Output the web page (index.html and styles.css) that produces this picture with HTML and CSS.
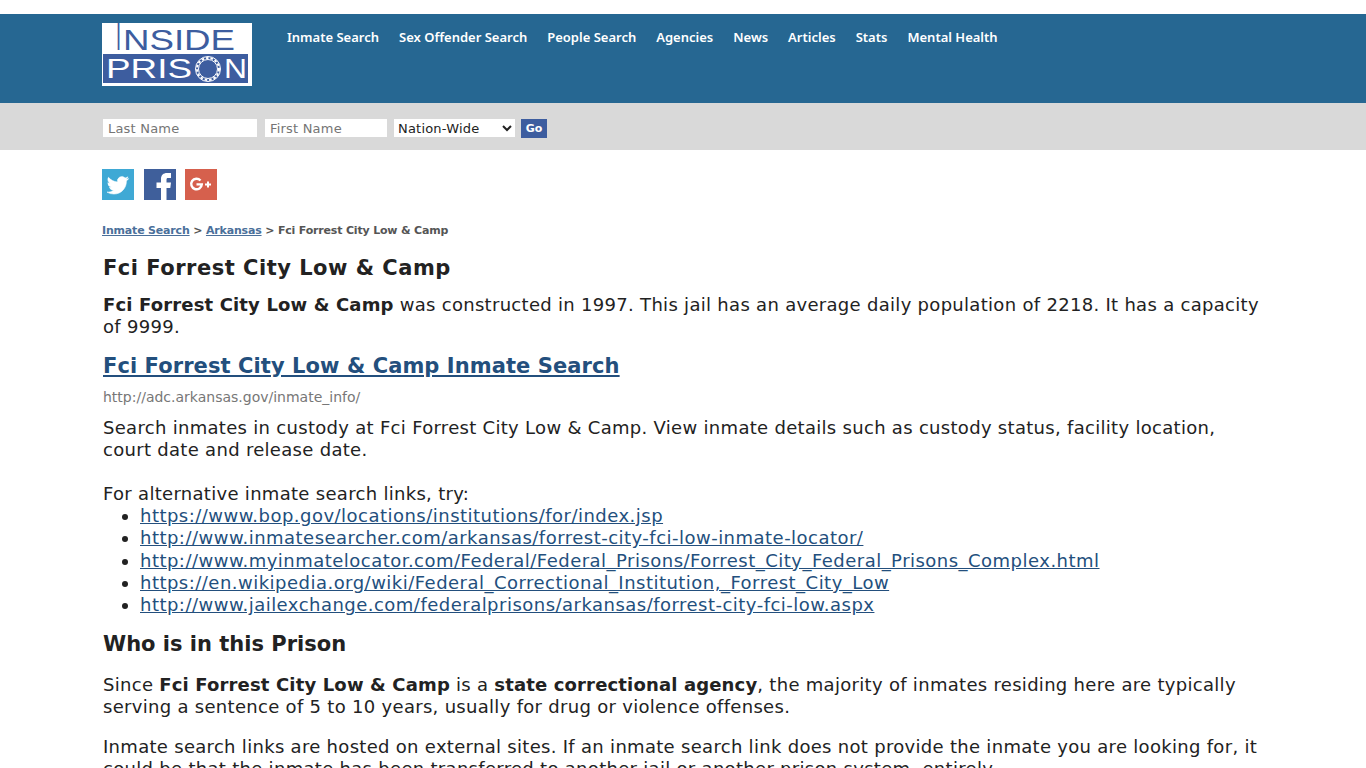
FILE: index.html
```html
<!doctype html>
<html lang="en">
	<head>
		<meta charset="UTF-8">
		<title>Fci Forrest City Low &amp; Camp</title>
		<link rel="stylesheet" href="styles.css">
	</head>
	<body>
		<div class="header">
			<div class="wrap headerrow">
				<svg class="logo" width="150" height="63" viewBox="0 0 150 63">
					<rect width="150" height="63" fill="#fff"/>
					<rect x="1" y="31" width="145" height="29" fill="#3d5d9f"/>
					<text class="logotop" x="14" y="27" font-size="38" textLength="5" lengthAdjust="spacingAndGlyphs">I</text>
					<text class="logotop" x="21" y="27" font-size="30" textLength="112" lengthAdjust="spacingAndGlyphs">NSIDE</text>
					<text class="logobottom" x="4" y="55" font-size="28" textLength="86" lengthAdjust="spacingAndGlyphs">PRIS</text>
					<text class="logobottom" x="122" y="55" font-size="28" textLength="23" lengthAdjust="spacingAndGlyphs">N</text>
					<circle cx="106" cy="46" r="12.5" fill="none" stroke="#fff" stroke-width="1"/>
					<circle cx="106" cy="46" r="9.5" fill="none" stroke="#fff" stroke-width="1"/>
					<circle cx="106" cy="46" r="11" fill="none" stroke="#fff" stroke-width="2" stroke-dasharray="2.5 2"/>
				</svg>
				<div class="nav">
					<a href="#">Inmate Search</a>
					<a href="#">Sex Offender Search</a>
					<a href="#">People Search</a>
					<a href="#">Agencies</a>
					<a href="#">News</a>
					<a href="#">Articles</a>
					<a href="#">Stats</a>
					<a href="#">Mental Health</a>
				</div>
			</div>
		</div>
		<div class="searchbar">
			<form class="wrap searchrow">
				<input class="champ nom" type="text" placeholder="Last Name">
				<input class="champ prenom" type="text" placeholder="First Name">
				<select class="etat">
					<option>Nation-Wide</option>
				</select>
				<input class="go" type="button" value="Go">
			</form>
		</div>
		<div class="wrap contenu">
			<div class="social">
				<a class="icone twitter" href="#">
					<svg width="32" height="31" viewBox="0 0 32 31"><path fill="#fff" stroke="#fff" stroke-width=".6" transform="translate(5 5.500) scale(.9)" d="M23.953 4.570a10 10 0 0 1-2.825.775 4.958 4.958 0 0 0 2.163-2.723c-.951.555-2.005.959-3.127 1.184a4.920 4.920 0 0 0-8.384 4.482C7.690 8.095 4.067 6.130 1.640 3.162a4.822 4.822 0 0 0-.666 2.475c0 1.710.870 3.213 2.188 4.096a4.904 4.904 0 0 1-2.228-.616v.06a4.923 4.923 0 0 0 3.946 4.827 4.996 4.996 0 0 1-2.212.085 4.936 4.936 0 0 0 4.604 3.417 9.867 9.867 0 0 1-6.102 2.105c-.39 0-.779-.023-1.170-.067a13.995 13.995 0 0 0 7.557 2.209c9.053 0 13.998-7.496 13.998-13.985 0-.21 0-.42-.015-.63A9.935 9.935 0 0 0 24 4.590z"/></svg>
				</a>
				<a class="icone facebook" href="#">
					<svg width="32" height="31" viewBox="0 0 32 31"><path fill="#fff" d="M17 31V19h-4.500v-5.500H17V10c0-4 2.500-6 6-6h4v5h-3c-1.200 0-1.500.6-1.500 1.800v2.700h4.500l-.7 5.500h-3.800V31z"/></svg>
				</a>
				<a class="icone google" href="#">
					<svg width="32" height="31" viewBox="0 0 32 31"><path fill="none" stroke="#fff" stroke-width="2.400" d="M15.500 11.500A5.300 5.300 0 1 0 16.800 15.400H11.500"/><path fill="none" stroke="#fff" stroke-width="2" d="M20 15.500h6M23 12.500v6"/></svg>
				</a>
			</div>
			<div class="fil"><a href="#">Inmate Search</a> &gt; <a href="#">Arkansas</a> &gt; Fci Forrest City Low &amp; Camp</div>
			<h1 class="premier">Fci Forrest City Low &amp; Camp</h1>
			<p class="intro"><b>Fci Forrest City Low &amp; Camp</b> was constructed in 1997. This jail has an average daily population of 2218. It has a capacity of 9999.</p>
			<h2><a href="#">Fci Forrest City Low &amp; Camp Inmate Search</a></h2>
			<div class="adresse">http://adc.arkansas.gov/inmate_info/</div>
			<div class="bloc">
				Search inmates in custody at Fci Forrest City Low &amp; Camp. View inmate details such as custody status, facility location, court date and release date.<br><br>
				For alternative inmate search links, try:
				<ul>
					<li><a href="#">https://www.bop.gov/locations/institutions/for/index.jsp</a></li>
					<li><a href="#">http://www.inmatesearcher.com/arkansas/forrest-city-fci-low-inmate-locator/</a></li>
					<li><a href="#">http://www.myinmatelocator.com/Federal/Federal_Prisons/Forrest_City_Federal_Prisons_Complex.html</a></li>
					<li><a href="#">https://en.wikipedia.org/wiki/Federal_Correctional_Institution,_Forrest_City_Low</a></li>
					<li><a href="#">http://www.jailexchange.com/federalprisons/arkansas/forrest-city-fci-low.aspx</a></li>
				</ul>
			</div>
			<h1 class="second">Who is in this Prison</h1>
			<p class="apres">Since <b>Fci Forrest City Low &amp; Camp</b> is a <b>state correctional agency</b>, the majority of inmates residing here are typically serving a sentence of 5 to 10 years, usually for drug or violence offenses.</p>
			<p class="dernier">Inmate search links are hosted on external sites. If an inmate search link does not provide the inmate you are looking for, it could be that the inmate has been transferred to another jail or another prison system, entirely.</p>
		</div>
	</body>
</html>
```

FILE: styles.css
```css
html, body
{
	margin: 0;
	padding: 0;
}
body
{
	background: #fff;
	color: #222;
	font-family: "DejaVu Sans", sans-serif;
	font-size: 18px;
	line-height: 22px;
	letter-spacing: 0.3px;
	padding-top: 14px;
	overflow: hidden;
	height: 754px;
}
a
{
	color: #234f7d;
}
b
{
	letter-spacing: 0.15px;
}
.wrap
{
	width: 1162px;
	margin: 0 auto;
}
.header
{
	background: #266792;
	height: 89px;
}
.headerrow
{
	display: flex;
	padding-top: 9px;
}
.logo
{
	display: block;
	flex: none;
	letter-spacing: 0;
}
.logotop, .logobottom
{
	font-family: "Liberation Sans", sans-serif;
}
.logotop
{
	fill: #3d5d9f;
}
.logobottom
{
	fill: #fff;
}
.nav
{
	display: flex;
	gap: 20px;
	padding: 6px 0 0 35px;
	font-family: "Noto Sans", sans-serif;
	font-size: 13px;
	font-weight: 600;
	line-height: 17px;
	letter-spacing: 0;
}
.nav a
{
	color: #fff;
	text-decoration: none;
}
.searchbar
{
	background: #d9d9d9;
	height: 47px;
}
.searchrow
{
	display: flex;
	align-items: flex-start;
	padding-top: 16px;
}
.champ, .etat
{
	box-sizing: border-box;
	height: 18px;
	border: 0;
	background: #fff;
	font-family: "DejaVu Sans", sans-serif;
	font-size: 13px;
	letter-spacing: 0.2px;
	padding: 0 5px;
	margin: 0 7px 0 1px;
}
.nom
{
	width: 154px;
}
.prenom
{
	width: 122px;
}
.etat
{
	width: 121px;
	padding: 0;
	margin: 0 6px 0 0;
	color: #222;
}
.go
{
	width: 26px;
	height: 19px;
	border: 0;
	padding: 0;
	background: #3d5d9f;
	color: #fff;
	font-family: "DejaVu Sans", sans-serif;
	font-size: 11px;
	font-weight: bold;
	letter-spacing: 0;
}
.social
{
	display: flex;
	padding-top: 19px;
	height: 31px;
}
.icone
{
	display: block;
	width: 32px;
	height: 31px;
	margin-right: 10px;
}
.icone svg
{
	display: block;
}
.twitter
{
	background: #3fa9d5;
}
.facebook
{
	background: #3f5f9b;
	margin-right: 9px;
}
.google
{
	background: #d6604d;
}
.fil
{
	margin-top: 23px;
	padding-bottom: 1px;
	font-size: 11px;
	line-height: 16px;
	font-weight: bold;
	letter-spacing: -0.18px;
	color: #555;
}
.fil a
{
	color: #4a6f9a;
}
h1
{
	font-size: 21px;
	line-height: 28px;
	margin: 14px 0 0 1px;
	letter-spacing: 0;
}
.premier
{
	letter-spacing: 0.5px;
}
p
{
	margin: 12px 0 0 1px;
}
.apres
{
	margin-top: 16px;
}
.dernier
{
	margin-top: 18px;
}
h2
{
	font-size: 21px;
	line-height: 28px;
	margin: 14px 0 0 1px;
	letter-spacing: 0.08px;
}
.adresse
{
	margin: 8px 0 0 1px;
	font-size: 14px;
	line-height: 18px;
	letter-spacing: 0;
	color: #777;
}
.bloc
{
	margin: 11px 0 0 1px;
}
ul
{
	margin: 0;
	padding-left: 37px;
	letter-spacing: 0.48px;
}
li
{
	line-height: 22.3px;
}
```
